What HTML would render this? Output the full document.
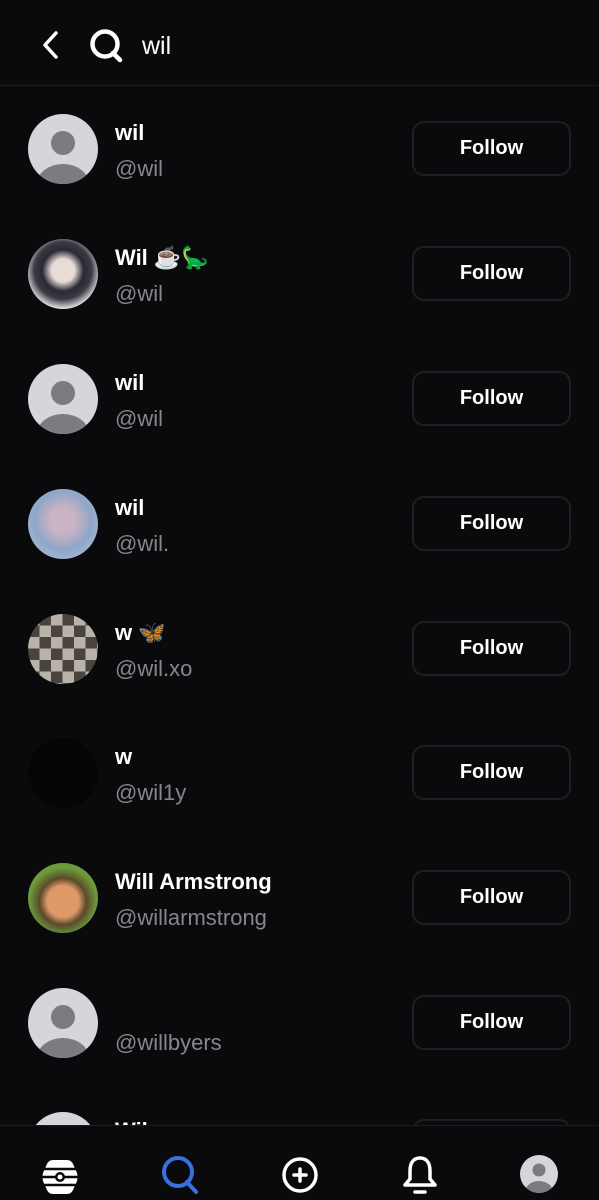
<!DOCTYPE html>
<html><head><meta charset="utf-8"><style>
*{margin:0;padding:0;box-sizing:border-box}
body{width:599px;height:1200px;background:#0a0a0c;font-family:"Liberation Sans","Noto Sans CJK JP",sans-serif;color:#fff;overflow:hidden;position:relative}
.hdr{position:absolute;left:0;top:0;width:599px;height:86px;border-bottom:1px solid #1c1c1f}
.q{position:absolute;left:142px;top:32px;font-size:25px;color:#fff}
.row{position:absolute;left:0;width:599px;height:70px}
.av{position:absolute;left:28px;top:0;width:70px;height:70px;border-radius:50%;overflow:hidden}
.name{position:absolute;left:115px;top:6px;font-size:22px;font-weight:bold}
.handle{position:absolute;left:115px;top:42px;font-size:22px;color:#86868b}
.btn{position:absolute;left:412px;top:7px;width:159px;height:55px;border:2px solid #1f1f23;border-radius:12px;font-size:20px;font-weight:bold;text-align:center;line-height:51px}
.nav{position:absolute;left:0;top:1125px;width:599px;height:75px;background:#0a0a0c;border-top:1px solid #1c1c1f}
</style></head><body>
<div class="hdr">
<svg style="position:absolute;left:38px;top:30px" width="26" height="32" viewBox="0 0 26 32"><path d="M18 3 L7 15 L18 27" stroke="#fff" stroke-width="3.5" fill="none" stroke-linecap="round" stroke-linejoin="round"/></svg>
<svg style="position:absolute;left:86px;top:27px" width="40" height="38" viewBox="0 0 40 38"><circle cx="19" cy="17" r="12.5" stroke="#fff" stroke-width="4.5" fill="none"/><path d="M27 26 L34 33" stroke="#fff" stroke-width="4.5" stroke-linecap="round"/></svg>
<div class="q">wil</div>
</div>

<div class="row" style="top:114px"><div class="av" style="background:#d5d6db"><svg width="70" height="70"><circle cx="35" cy="29" r="12" fill="#7b7c82"/><ellipse cx="35" cy="70" rx="26" ry="20" fill="#7b7c82"/></svg></div><div class="name">wil</div><div class="handle">@wil</div><div class="btn">Follow</div></div>

<div class="row" style="top:239px"><div class="av" style="background:radial-gradient(circle at 50% 45%,#e8dcd8 0 22%,#2a2a33 40%,#3a3a44 55%,#eee 75%)"></div><div class="name">Wil ☕🦕</div><div class="handle">@wil</div><div class="btn">Follow</div></div>

<div class="row" style="top:364px"><div class="av" style="background:#d5d6db"><svg width="70" height="70"><circle cx="35" cy="29" r="12" fill="#7b7c82"/><ellipse cx="35" cy="70" rx="26" ry="20" fill="#7b7c82"/></svg></div><div class="name">wil</div><div class="handle">@wil</div><div class="btn">Follow</div></div>

<div class="row" style="top:489px"><div class="av" style="background:radial-gradient(circle at 50% 45%,#c9b3c4 0 25%,#8fa6c8 55%,#b8c8de)"></div><div class="name">wil</div><div class="handle">@wil.</div><div class="btn">Follow</div></div>

<div class="row" style="top:614px"><div class="av" style="background:repeating-conic-gradient(#4a443e 0 25%,#b8b2a8 0 50%) 0 0/23px 23px"></div><div class="name">w 🦋</div><div class="handle">@wil.xo</div><div class="btn">Follow</div></div>

<div class="row" style="top:738px"><div class="av" style="background:#050505"></div><div class="name">w</div><div class="handle">@wil1y</div><div class="btn">Follow</div></div>

<div class="row" style="top:863px"><div class="av" style="background:radial-gradient(circle at 50% 55%,#e09a6a 0 30%,#5b4a2a 45%,#6c9a3c 65%)"></div><div class="name">Will Armstrong</div><div class="handle">@willarmstrong</div><div class="btn">Follow</div></div>

<div class="row" style="top:988px"><div class="av" style="background:#d5d6db"><svg width="70" height="70"><circle cx="35" cy="29" r="12" fill="#7b7c82"/><ellipse cx="35" cy="70" rx="26" ry="20" fill="#7b7c82"/></svg></div><div class="handle">@willbyers</div><div class="btn">Follow</div></div>

<div class="row" style="top:1112px"><div class="av" style="background:#d5d6db"></div><div class="name">Wil</div><div class="btn">Follow</div></div>

<div class="nav">
<svg style="position:absolute;left:38px;top:29px" width="44" height="44" viewBox="0 0 44 44"><path d="M15 5 H29 Q33 5 35 9 L39 18 Q40 22 39 26 L35 35 Q33 39 29 39 H15 Q11 39 9 35 L5 26 Q4 22 5 18 L9 9 Q11 5 15 5 Z" fill="#fff"/><path d="M6 14 H38 M4 22 H40 M6 30 H38" stroke="#0a0a0c" stroke-width="2.5"/><circle cx="22" cy="22" r="5" fill="#0a0a0c"/><circle cx="22" cy="22" r="2.5" fill="#fff"/></svg>
<svg style="position:absolute;left:157px;top:26px" width="46" height="48" viewBox="0 0 46 48"><circle cx="21" cy="20" r="14" stroke="#3a6fe0" stroke-width="4" fill="none"/><path d="M30 30 L39 40" stroke="#3a6fe0" stroke-width="4" stroke-linecap="round"/></svg>
<svg style="position:absolute;left:280px;top:29px" width="40" height="40" viewBox="0 0 40 40"><circle cx="20" cy="20" r="16" stroke="#fff" stroke-width="3.5" fill="none"/><path d="M20 14 V26 M14 20 H26" stroke="#fff" stroke-width="3.5" stroke-linecap="round"/></svg>
<svg style="position:absolute;left:400px;top:28px" width="40" height="44" viewBox="0 0 40 44"><path d="M20 4 C12 4 10 11 10 17 V25 L5 31 H35 L30 25 V17 C30 11 28 4 20 4 Z" stroke="#fff" stroke-width="3.5" fill="none" stroke-linejoin="round"/><path d="M15 38 H25" stroke="#fff" stroke-width="3.5" stroke-linecap="round"/></svg>
<div style="position:absolute;left:520px;top:29px;width:38px;height:38px;border-radius:50%;background:#d5d6db;overflow:hidden"><svg width="38" height="38"><circle cx="19" cy="15" r="6.5" fill="#7b7c82"/><ellipse cx="19" cy="37" rx="14" ry="11" fill="#7b7c82"/></svg></div>
</div>
</body></html>
